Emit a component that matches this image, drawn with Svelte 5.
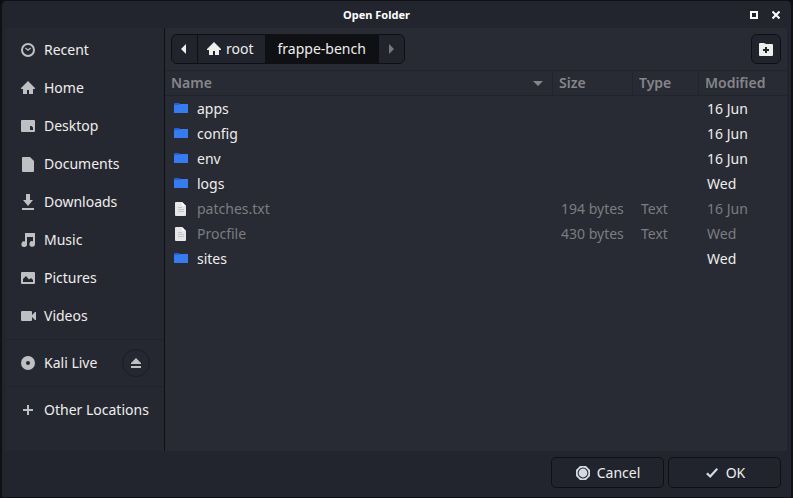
<script>
  const places = [
    { label: 'Recent', icon: 'recent' },
    { label: 'Home', icon: 'home' },
    { label: 'Desktop', icon: 'desktop' },
    { label: 'Documents', icon: 'documents' },
    { label: 'Downloads', icon: 'downloads' },
    { label: 'Music', icon: 'music' },
    { label: 'Pictures', icon: 'pictures' },
    { label: 'Videos', icon: 'videos' }
  ];

  const files = [
    { name: 'apps', dir: true, size: '', type: '', modified: '16 Jun' },
    { name: 'config', dir: true, size: '', type: '', modified: '16 Jun' },
    { name: 'env', dir: true, size: '', type: '', modified: '16 Jun' },
    { name: 'logs', dir: true, size: '', type: '', modified: 'Wed' },
    { name: 'patches.txt', dir: false, size: '194 bytes', type: 'Text', modified: '16 Jun' },
    { name: 'Procfile', dir: false, size: '430 bytes', type: 'Text', modified: 'Wed' },
    { name: 'sites', dir: true, size: '', type: '', modified: 'Wed' }
  ];
</script>

{#snippet icon(name)}
  <svg class="icon" viewBox="0 0 16 16" width="16" height="16" fill="currentColor" aria-hidden="true">
    {#if name === 'recent'}
      <circle cx="8" cy="8" r="6" fill="none" stroke="currentColor" stroke-width="2" />
      <path d="M5.500 6 8 8.200 10.700 6" fill="none" stroke="currentColor" stroke-width="1.3" />
    {:else if name === 'home'}
      <path d="M8 1 1 8v1h2v5h4v-4h2v4h4V9h2V8z" />
    {:else if name === 'desktop'}
      <path fill-rule="evenodd" d="M2 2h12a1 1 0 0 1 1 1v10a1 1 0 0 1-1 1H2a1 1 0 0 1-1-1V3a1 1 0 0 1 1-1zM10 8v4h3V9.500L11.500 8z" />
    {:else if name === 'documents'}
      <path d="M3 1h7l4 4v10a1 1 0 0 1-1 1H3a1 1 0 0 1-1-1V2a1 1 0 0 1 1-1z" />
    {:else if name === 'downloads'}
      <path d="M6 0h4v6h3l-5 6-5-6h3zM2 14h12v2H2z" />
    {:else if name === 'music'}
      <path d="M5 1h10v11a2.800 2.800 0 1 1-2-2.700V5H7v7.200A2.800 2.800 0 1 1 5 9.500z" />
    {:else if name === 'pictures'}
      <path fill-rule="evenodd" d="M2 2h12a1 1 0 0 1 1 1v10a1 1 0 0 1-1 1H2a1 1 0 0 1-1-1V3a1 1 0 0 1 1-1zM3 12h10V10l-2-2-2 1.500L6 6 3 9z" />
    {:else if name === 'videos'}
      <path d="M2 3h9a1 1 0 0 1 1 1v3l3-3h1v8h-1l-3-3v3a1 1 0 0 1-1 1H2a1 1 0 0 1-1-1V4a1 1 0 0 1 1-1z" />
    {:else if name === 'disc'}
      <path fill-rule="evenodd" d="M8 1a7 7 0 1 1 0 14A7 7 0 0 1 8 1zm0 5a2 2 0 1 0 0 4 2 2 0 0 0 0-4z" />
    {:else if name === 'plus'}
      <path d="M7 3h2v4h4v2H9v4H7V9H3V7h4z" />
    {:else if name === 'eject'}
      <path d="M8 3l5 5v1H3V8zM3 11h10v2H3z" />
    {:else if name === 'back'}
      <path d="M9 3v10L4 8z" />
    {:else if name === 'forward'}
      <path d="M6 3v10l5-5z" />
    {:else if name === 'new-folder'}
      <path fill-rule="evenodd" d="M2 2h4l2 1h6a1 1 0 0 1 1 1v10a1 1 0 0 1-1 1H2a1 1 0 0 1-1-1V3a1 1 0 0 1 1-1zM7 6v2H5v2h2v2h2v-2h2V8H9V6z" />
    {:else if name === 'folder'}
      <path fill="#2460d0" d="M2 2h4l1 1h7a1 1 0 0 1 1 1v7H1V3a1 1 0 0 1 1-1z" />
      <path fill="#367bf0" d="M1 4h5l1-1h8v8.500a.5.5 0 0 1-.5.5h-13a.5.5 0 0 1-.5-.5z" />
    {:else if name === 'file'}
      <path fill="#e6e6e8" d="M3 1h6l4 4v9a1 1 0 0 1-1 1H3a1 1 0 0 1-1-1V2a1 1 0 0 1 1-1z" />
      <path fill="#ffffff" d="M9 1l4 4H9z" />
      <path fill="#c4c4c8" d="M5 6h4v1H5zM5 8h6v1H5zM5 10h6v1H5z" />
    {:else if name === 'cancel'}
      <path fill-rule="evenodd" d="M5 1h6l4 4v6l-4 4H5l-4-4V5zM8 2.600a5.400 5.400 0 1 0 0 10.800A5.400 5.400 0 0 0 8 2.600z" />
      <circle cx="8" cy="8" r="4.400" />
    {:else if name === 'ok'}
      <path d="M2 9l2-1.500 2 2.500 6.500-7L14 4.500 6.300 13z" />
    {/if}
  </svg>
{/snippet}

<main class="window">
  <header class="titlebar">
    <h1>Open Folder</h1>
    <div class="controls">
      <button aria-label="Maximize">
        <svg width="8" height="8" viewBox="0 0 8 8"><path d="M1 1h6v6H1z" fill="none" stroke="currentColor" stroke-width="2" /></svg>
      </button>
      <button aria-label="Close">
        <svg width="8" height="8" viewBox="0 0 8 8"><path d="M.5.5l7 7M7.500.5l-7 7" fill="none" stroke="currentColor" stroke-width="2" /></svg>
      </button>
    </div>
  </header>

  <div class="content">
    <nav class="sidebar" aria-label="Places">
      {#each places as place}
        <a class="place" href="#{place.icon}">{@render icon(place.icon)}<span>{place.label}</span></a>
      {/each}
      <hr />
      <div class="device">
        <a class="place" href="#kali-live">{@render icon('disc')}<span>Kali Live</span></a>
        <button class="eject" aria-label="Eject">{@render icon('eject')}</button>
      </div>
      <hr />
      <a class="place" href="#other">{@render icon('plus')}<span>Other Locations</span></a>
    </nav>

    <section class="browser">
      <div class="toolbar">
        <div class="path">
          <button class="arrow" aria-label="Back">{@render icon('back')}</button>
          <button class="home">{@render icon('home')}<span>root</span></button>
          <button class="current">frappe-bench</button>
          <button class="arrow" aria-label="Forward" disabled>{@render icon('forward')}</button>
        </div>
        <button class="create" aria-label="Create Folder">{@render icon('new-folder')}</button>
      </div>

      <table>
        <colgroup>
          <col />
          <col class="size" />
          <col class="type" />
          <col class="modified" />
        </colgroup>
        <thead>
          <tr>
            <th>
              <div class="sorted">
                Name
                <svg width="10" height="5" viewBox="0 0 10 5"><path d="M0 0h10L5 5z" fill="currentColor" /></svg>
              </div>
            </th>
            <th>Size</th>
            <th>Type</th>
            <th>Modified</th>
          </tr>
        </thead>
        <tbody>
          {#each files as file}
            <tr class:dim={!file.dir}>
              <td><div class="name">{@render icon(file.dir ? 'folder' : 'file')}<span>{file.name}</span></div></td>
              <td>{file.size}</td>
              <td>{file.type}</td>
              <td>{file.modified}</td>
            </tr>
          {/each}
        </tbody>
      </table>
    </section>
  </div>

  <footer>
    <button>{@render icon('cancel')}<span>Cancel</span></button>
    <button>{@render icon('ok')}<span>OK</span></button>
  </footer>
</main>

<style>
  :global(body) {
    background: #0d0e11;
  }

  * {
    box-sizing: border-box;
  }

  .window {
    display: flex;
    flex-direction: column;
    min-height: 100vh;
    border: solid #101115;
    border-width: 1px 2px;
    border-radius: 6px 6px 0 0;
    padding: 0 4px;
    background: #23252e;
    color: #eeeeec;
    font: 14px/20px 'Noto Sans', sans-serif;
  }

  button {
    display: flex;
    align-items: center;
    justify-content: center;
    margin: 0;
    padding: 0;
    border: 0;
    background: none;
    color: inherit;
    font: inherit;
  }

  .icon {
    flex: none;
    display: block;
  }

  .titlebar {
    display: grid;
    grid-template-columns: 1fr auto 1fr;
    align-items: center;
    height: 27px;
    padding: 0 7px;
    color: #ffffff;
  }

  h1 {
    grid-column: 2;
    margin: 0;
    padding-right: 40px;
    font-size: 11px;
    line-height: 16px;
  }

  .controls {
    display: flex;
    justify-content: flex-end;
    gap: 14px;
  }

  .controls svg {
    display: block;
  }

  .content {
    flex: 1;
    display: flex;
  }

  .sidebar {
    flex: none;
    width: 159px;
    padding-top: 3px;
    border-right: 1px solid #0f1014;
    background: #262831;
  }

  .place {
    display: flex;
    align-items: center;
    gap: 8px;
    height: 38px;
    padding-left: 14px;
    color: inherit;
    text-decoration: none;
    white-space: nowrap;
  }

  .place .icon,
  .eject .icon {
    color: #bfc0c3;
  }

  hr {
    height: 1px;
    margin: 4px 0;
    border: 0;
    background: #202229;
  }

  .device {
    display: flex;
    align-items: center;
    justify-content: space-between;
    padding-right: 14px;
  }

  .eject {
    width: 28px;
    height: 28px;
    border: 1px solid #1b1c22;
    border-radius: 50%;
  }

  .browser {
    flex: 1;
    min-width: 0;
    background: #282a34;
  }

  .toolbar {
    display: flex;
    justify-content: space-between;
    padding: 6px;
  }

  .path {
    display: flex;
    height: 30px;
    border: 1px solid #0f1014;
    border-radius: 6px;
    overflow: hidden;
    background: #22242d;
  }

  .arrow {
    width: 25px;
  }

  .arrow:disabled {
    color: #77787c;
  }

  .home {
    gap: 4px;
    padding: 0 11px 0 8px;
    border-left: 1px solid #0f1014;
  }

  .current {
    padding: 0 13px;
    background: #0f1014;
  }

  .create {
    width: 30px;
    height: 30px;
    border: 1px solid #0f1014;
    border-radius: 6px;
    background: #22242d;
  }

  table {
    width: 100%;
    table-layout: fixed;
    border-collapse: separate;
    border-spacing: 0;
  }

  .size {
    width: 80px;
  }

  .type {
    width: 66px;
  }

  .modified {
    width: 88px;
  }

  th {
    height: 26px;
    padding: 0 6px;
    border: solid #22242c;
    border-width: 1px 1px 1px 0;
    color: #85868a;
    font-weight: 600;
    text-align: left;
  }

  th:last-child {
    border-right: 0;
  }

  .sorted {
    display: flex;
    align-items: center;
    justify-content: space-between;
    padding-right: 3px;
  }

  td {
    height: 25px;
    padding: 0 8px;
    white-space: nowrap;
  }

  .name {
    display: flex;
    align-items: center;
    gap: 8px;
  }

  .dim {
    color: #7c7d80;
  }

  footer {
    display: flex;
    justify-content: flex-end;
    gap: 4px;
    padding: 6px 6px 9px;
  }

  footer button {
    gap: 6px;
    width: 113px;
    height: 31px;
    border: 1px solid #0f1014;
    border-radius: 5px;
    background: #22242d;
  }

  footer .icon {
    color: #d3dae3;
  }
</style>
